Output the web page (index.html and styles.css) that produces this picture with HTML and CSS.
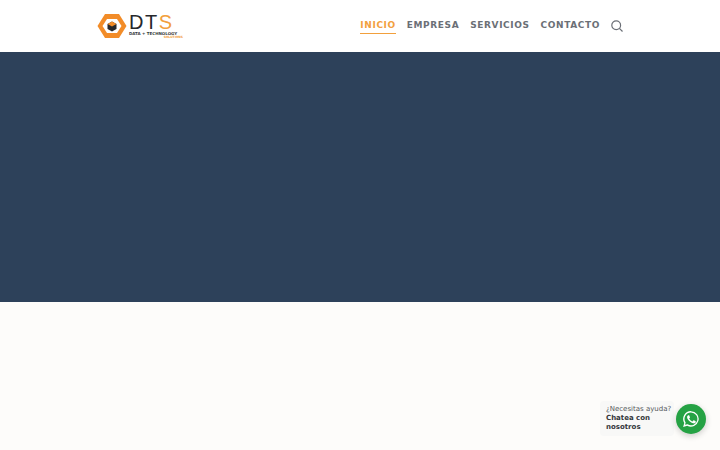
FILE: index.html
```html
<!DOCTYPE html>
<html lang="es">
<head>
  <meta charset="UTF-8">
  <title>DTS</title>
  <link rel="stylesheet" href="styles.css">
</head>
<body>
  <header class="site-header">
    <a class="logo" href="#">
      <svg class="logo-mark" width="30" height="26" viewBox="0 0 30 26">
        <path d="M8 1 H22 L29.5 13 L22 25 H8 L.5 13 Z" fill="#f28c28"/>
        <path d="M10 6 H20 L24.5 13 L20 20 H10 L5.5 13 Z" fill="#fff"/>
        <path d="M15 8.5 L19.5 11 V16 L15 18.5 L10.5 16 V11 Z" fill="#26282c"/>
        <path d="M15 8.5 L19.5 11 L15 13.5 L10.5 11 Z" fill="#f28c28"/>
      </svg>
      <div class="logo-text">
        <div class="logo-name">DT<span class="logo-s">S</span></div>
        <div class="logo-sub">DATA + TECHNOLOGY</div>
        <div class="logo-sol">SOLUTIONS</div>
      </div>
    </a>
    <nav class="main-nav">
      <a class="nav-link active" href="#">INICIO</a>
      <a class="nav-link" href="#">EMPRESA</a>
      <a class="nav-link" href="#">SERVICIOS</a>
      <a class="nav-link" href="#">CONTACTO</a>
      <svg class="search-icon" width="12" height="12" viewBox="0 0 12 12" fill="none" stroke="#6b6f76" stroke-width="1.2">
        <circle cx="5.2" cy="5.2" r="4.4"/>
        <path d="M8.4 8.4 L11.5 11.5"/>
      </svg>
    </nav>
  </header>

  <section class="hero"></section>
  <main class="content"></main>

  <div class="chat-widget">
    <div class="chat-bubble">
      <div class="chat-ask">¿Necesitas ayuda?</div>
      <div class="chat-cta">Chatea con nosotros</div>
    </div>
    <div class="chat-btn">
      <svg width="18" height="18" viewBox="0 0 24 24" fill="#fff">
        <path d="M12 1.5A10.4 10.4 0 0 0 3 17.2L1.5 22.5l5.5-1.4A10.4 10.4 0 1 0 12 1.5Zm0 1.9a8.5 8.5 0 1 1-4.5 15.7l-.4-.2-3 .8.8-2.9-.2-.4A8.5 8.5 0 0 1 12 3.4Z"/>
        <path d="M8.6 7c-.2 0-.5 0-.8.4-.3.3-1 1-1 2.400s1 2.800 1.200 3c.1.200 2 3.100 4.900 4.300 2.400 1 2.900.8 3.400.7.500 0 1.700-.7 1.900-1.300.2-.7.2-1.200.2-1.300-.1-.2-.3-.2-.6-.4l-2-1c-.3-.1-.5-.1-.7.2l-.9 1.100c-.2.200-.3.200-.6.100-.3-.2-1.200-.5-2.300-1.500-.9-.8-1.400-1.700-1.600-2-.2-.3 0-.4.100-.6l.5-.5.300-.5c.1-.2 0-.4 0-.5l-.9-2.200c-.2-.4-.4-.4-.6-.4Z"/>
      </svg>
    </div>
  </div>
</body>
</html>
```

FILE: styles.css
```css
html, body {
  height: 100%;
}
body {
  margin: 0;
  display: flex;
  flex-direction: column;
  overflow: hidden;
  font-family: "DejaVu Sans", sans-serif;
  background-color: #fdfcfa;
}
.site-header {
  height: 52px;
  flex: none;
  box-sizing: border-box;
  padding: 0 97px;
  display: flex;
  align-items: center;
  justify-content: space-between;
  background-color: #fff;
}
.logo {
  display: flex;
  align-items: center;
  gap: 2px;
  text-decoration: none;
}
.logo-mark {
  flex: none;
}
.logo-text {
  display: flex;
  flex-direction: column;
  width: 54px;
}
.logo-name {
  font-family: "Liberation Sans", sans-serif;
  font-size: 20px;
  line-height: 17px;
  letter-spacing: 1.5px;
  color: #26282c;
  transform-origin: left;
}
.logo-s {
  color: #f2a03d;
}
.logo-sub {
  font-size: 4px;
  line-height: 5px;
  font-weight: bold;
  white-space: nowrap;
  color: #3a3c40;
}
.logo-sol {
  font-size: 3px;
  line-height: 3px;
  font-weight: bold;
  text-align: right;
  color: #f2a03d;
}
.main-nav {
  display: flex;
  align-items: center;
  gap: 11px;
}
.nav-link {
  font-size: 9px;
  font-weight: bold;
  letter-spacing: .6px;
  line-height: 13px;
  padding-bottom: 1px;
  color: #6b6f76;
  text-decoration: none;
  border-bottom: 1px solid transparent;
}
.nav-link.active {
  color: #f2a03d;
  border-bottom-color: #f2a03d;
}
.search-icon {
  margin-left: 0;
}
.hero {
  height: 250px;
  flex: none;
  background-color: #2d415a;
}
.content {
  flex: 1;
}
.chat-widget {
  position: fixed;
  right: 14px;
  bottom: 14px;
  display: flex;
  align-items: center;
}
.chat-bubble {
  width: 62px;
  padding: 4px 6px;
  background-color: #f8f8f7;
  border-radius: 4px;
  font-size: 7px;
  line-height: 9px;
  color: #33363a;
}
.chat-ask {
  color: #55585c;
  white-space: nowrap;
}
.chat-cta {
  font-weight: bold;
}
.chat-btn {
  width: 30px;
  height: 30px;
  margin-left: 2px;
  display: flex;
  align-items: center;
  justify-content: center;
  border-radius: 50%;
  background-color: #25a244;
  box-shadow: 0 2px 6px rgba(0, 0, 0, .2);
}
```
